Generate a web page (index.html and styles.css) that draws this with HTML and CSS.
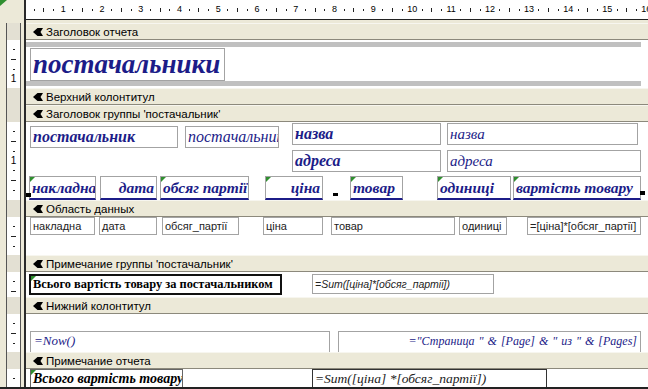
FILE: index.html
```html
<!DOCTYPE html>
<html>
<head>
<meta charset="utf-8">
<link rel="stylesheet" href="styles.css">
</head>
<body>
<div class="top">
  <div class="corner"><span class="tri"></span></div>
  <div class="ruler">
    <span class="m d"></span><span class="m t"></span><span class="m d"></span><span class="m n">1</span>
    <span class="m d"></span><span class="m t"></span><span class="m d"></span><span class="m n">2</span>
    <span class="m d"></span><span class="m t"></span><span class="m d"></span><span class="m n">3</span>
    <span class="m d"></span><span class="m t"></span><span class="m d"></span><span class="m n">4</span>
    <span class="m d"></span><span class="m t"></span><span class="m d"></span><span class="m n">5</span>
    <span class="m d"></span><span class="m t"></span><span class="m d"></span><span class="m n">6</span>
    <span class="m d"></span><span class="m t"></span><span class="m d"></span><span class="m n">7</span>
    <span class="m d"></span><span class="m t"></span><span class="m d"></span><span class="m n">8</span>
    <span class="m d"></span><span class="m t"></span><span class="m d"></span><span class="m n">9</span>
    <span class="m d"></span><span class="m t"></span><span class="m d"></span><span class="m n">10</span>
    <span class="m d"></span><span class="m t"></span><span class="m d"></span><span class="m n">11</span>
    <span class="m d"></span><span class="m t"></span><span class="m d"></span><span class="m n">12</span>
    <span class="m d"></span><span class="m t"></span><span class="m d"></span><span class="m n">13</span>
    <span class="m d"></span><span class="m t"></span><span class="m d"></span><span class="m n">14</span>
    <span class="m d"></span><span class="m t"></span><span class="m d"></span><span class="m n">15</span>
    <span class="m d"></span><span class="m t"></span><span class="m d"></span><span class="m n">16</span>
  </div>
</div>

<div class="row hdr">
  <div class="lc"><div class="vr"></div></div>
  <div class="bar"><svg class="ico" viewBox="0 0 10 8"><path d="M0 4 L4.5 0 H10 L7.5 4 L10 8 H4.5 Z"/></svg>Заголовок отчета</div>
</div>
<div class="row b1">
  <div class="lc"><div class="vr"><span class="vm s"></span><span class="vm w"></span><span class="vm s"></span><span class="vm">1</span><span class="vm s"></span></div></div>
  <div class="sec">
    <div class="line gb1"></div>
    <div class="c title">постачальники</div>
    <div class="line gb2"></div>
  </div>
</div>

<div class="row hdr">
  <div class="lc"><div class="vr"></div></div>
  <div class="bar"><svg class="ico" viewBox="0 0 10 8"><path d="M0 4 L4.5 0 H10 L7.5 4 L10 8 H4.5 Z"/></svg>Верхний колонтитул</div>
</div>
<div class="row hdr">
  <div class="lc"><div class="vr"></div></div>
  <div class="bar"><svg class="ico" viewBox="0 0 10 8"><path d="M0 4 L4.5 0 H10 L7.5 4 L10 8 H4.5 Z"/></svg>Заголовок группы 'постачальник'</div>
</div>
<div class="row b3">
  <div class="lc"><div class="vr"><span class="vm s"></span><span class="vm w"></span><span class="vm s"></span><span class="vm">1</span><span class="vm s"></span><span class="vm w"></span><span class="vm s"></span></div></div>
  <div class="sec">
    <div class="c lbl l-post">постачальник</div>
    <div class="c tb t-post">постачальник</div>
    <div class="c lbl l-nazva">назва</div>
    <div class="c tb t-nazva">назва</div>
    <div class="c lbl l-adr">адреса</div>
    <div class="c tb t-adr">адреса</div>
    <div class="c col k1 g">накладна</div>
    <div class="c col k2 r">дата</div>
    <div class="c col k3 g">обсяг партії</div>
    <div class="c col k4 g r">ціна</div>
    <div class="c col k5 g">товар</div>
    <div class="c col k6 g">одиниці</div>
    <div class="c col k7 g">вартість товару</div>
    <span class="hnd h1"></span>
    <span class="hnd h2"></span>
    <span class="hnd h3"></span>
  </div>
</div>

<div class="row hdr">
  <div class="lc"><div class="vr"></div></div>
  <div class="bar"><svg class="ico" viewBox="0 0 10 8"><path d="M0 4 L4.5 0 H10 L7.5 4 L10 8 H4.5 Z"/></svg>Область данных</div>
</div>
<div class="row b4">
  <div class="lc"><div class="vr"><span class="vm s"></span><span class="vm w"></span><span class="vm s"></span></div></div>
  <div class="sec">
    <div class="c dt d1">накладна</div>
    <div class="c dt d2">дата</div>
    <div class="c dt d3">обсяг_партії</div>
    <div class="c dt d4">ціна</div>
    <div class="c dt d5">товар</div>
    <div class="c dt d6">одиниці</div>
    <div class="c dt d7">=[ціна]*[обсяг_партії]</div>
  </div>
</div>

<div class="row hdr">
  <div class="lc"><div class="vr"></div></div>
  <div class="bar"><svg class="ico" viewBox="0 0 10 8"><path d="M0 4 L4.5 0 H10 L7.5 4 L10 8 H4.5 Z"/></svg>Примечание группы 'постачальник'</div>
</div>
<div class="row b5">
  <div class="lc"><div class="vr"><span class="vm s"></span><span class="vm w"></span></div></div>
  <div class="sec">
    <div class="c gsum g">Всього вартість товару за постачальником</div>
    <div class="c gexp">=Sum([ціна]*[обсяг_партії])</div>
  </div>
</div>

<div class="row hdr">
  <div class="lc"><div class="vr"></div></div>
  <div class="bar"><svg class="ico" viewBox="0 0 10 8"><path d="M0 4 L4.5 0 H10 L7.5 4 L10 8 H4.5 Z"/></svg>Нижний колонтитул</div>
</div>
<div class="row b6">
  <div class="lc"><div class="vr"><span class="vm s"></span><span class="vm w"></span><span class="vm s"></span></div></div>
  <div class="sec">
    <div class="c pf now">=Now()</div>
    <div class="c pf pages">="Страница " &amp; [Page] &amp; " из " &amp; [Pages]</div>
  </div>
</div>

<div class="row hdr">
  <div class="lc"><div class="vr"></div></div>
  <div class="bar"><svg class="ico" viewBox="0 0 10 8"><path d="M0 4 L4.5 0 H10 L7.5 4 L10 8 H4.5 Z"/></svg>Примечание отчета</div>
</div>
<div class="row b7">
  <div class="lc"><div class="vr"><span class="vm s"></span><span class="vm w"></span></div></div>
  <div class="sec">
    <div class="c rsum g">Всього вартість товару</div>
    <div class="c rexp">=Sum([ціна] *[обсяг_партії])</div>
  </div>
</div>
</body>
</html>
```
FILE: styles.css
```css
* { box-sizing: border-box; margin: 0; padding: 0; }
html, body { width: 648px; height: 389px; overflow: hidden; background: #ece9d8; }
body { font-family: "Liberation Sans", Arial, sans-serif; color: #000; }

.top { display: flex; height: 23px; }
.corner { flex: 0 0 26px; border-right: 2px solid #2a2a2a; position: relative; background: #ece9d8; }
.tri { position: absolute; left: 0; top: 0; border-top: 6px solid #2f8f2f; border-right: 7px solid transparent; }
.ruler { flex: 1; height: 20px; background: #fff; border-bottom: 1px solid #222; display: flex; align-items: center; padding-left: 3.4px; overflow: hidden; white-space: nowrap; }
.m { flex: 0 0 9.6875px; display: flex; justify-content: center; align-items: center; font-size: 9px; line-height: 1; }
.d::before { content: ""; width: 1px; height: 2px; background: #222; }
.t::before { content: ""; width: 1px; height: 4px; background: #222; }

.row { display: flex; }
.lc { flex: 0 0 26px; border-right: 2px solid #2a2a2a; padding-left: 6px; background: #ece9d8; }
.vr { width: 15px; height: 100%; border-left: 1px solid #555; border-right: 1px solid #555; background: #fff; overflow: hidden; display: flex; flex-direction: column; padding-top: 4.84px; }
.hdr .vr { background: #e3e0d3; }
.vm { flex: 0 0 9.6875px; display: flex; align-items: center; justify-content: center; font-size: 10px; line-height: 1; }
.s::before { content: ""; width: 2px; height: 1px; background: #222; }
.w::before { content: ""; width: 5px; height: 1px; background: #222; }

.hdr { height: 17px; }
.bar { flex: 1; display: flex; align-items: center; padding-left: 7px; font-size: 11.5px; background: #ece9d8; border-top: 1px solid #f7f6ef; border-bottom: 1px solid #8c897c; white-space: nowrap; }
.ico { width: 10px; height: 8px; margin-right: 3px; fill: #000; }

.sec { position: relative; flex: 1; background: #fff; overflow: hidden; }
.b1 { height: 48px; }
.b3 { height: 78px; }
.b4 { height: 38px; }
.b5 { height: 25px; }
.b6 { height: 38px; }
.b7 { height: 20px; border-bottom: 2px solid #222; }

.line { position: absolute; background: #c0c0c0; height: 5px; left: 0; width: 615px; }
.gb1 { top: 2px; }
.gb2 { top: 41px; }

.c { position: absolute; background: #fff; border: 1px solid #a3a3a3; overflow: hidden; white-space: nowrap; }
.g::before { content: ""; position: absolute; left: 0; top: 0; border-top: 5px solid #2f8f2f; border-right: 5px solid transparent; }

.title { left: 4px; top: 8px; width: 195px; height: 33px; font: italic bold 27px/30px "Liberation Serif", serif; color: #1c1c88; padding-left: 2px; }

.lbl { font: italic bold 16px/20px "Liberation Serif", serif; color: #1c1c88; padding-left: 2px; }
.tb { font: italic 15px/20px "Liberation Serif", serif; color: #1c1c88; padding-left: 2px; }
.t-post { font-size: 16px; }
.l-post { left: 4px; top: 4px; width: 148px; height: 22px; }
.t-post { left: 159px; top: 4px; width: 94px; height: 22px; }
.l-nazva { left: 266px; top: 1px; width: 149px; height: 22px; }
.t-nazva { left: 421px; top: 1px; width: 191px; height: 22px; }
.l-adr { left: 266px; top: 28px; width: 149px; height: 22px; }
.t-adr { left: 421px; top: 28px; width: 194px; height: 22px; }

.col { top: 54px; height: 24px; font: italic bold 15.5px/20px "Liberation Serif", serif; color: #1c1c88; padding: 1px 2px 0; border-color: #a3a3a3; border-bottom: 2px solid #1c1c88; }
.r { text-align: right; }
.k1 { left: 3px; width: 67px; }
.k2 { left: 74px; width: 57px; }
.k3 { left: 134px; width: 89px; }
.k4 { left: 239px; width: 58px; }
.k5 { left: 324px; width: 53px; }
.k6 { left: 411px; width: 74px; }
.k7 { left: 487px; width: 128px; }
.hnd { position: absolute; background: #000; width: 5px; height: 4px; }
.h1 { left: 0; top: 71px; }
.h2 { left: 307px; top: 71px; width: 5px; height: 3px; }
.h3 { left: 614px; top: 69px; }

.dt { top: 0; height: 18px; font: 11px/16px "Liberation Sans", Arial, sans-serif; color: #222; padding-left: 2px; }
.d1 { left: 4px; width: 65px; }
.d2 { left: 73px; width: 58px; }
.d3 { left: 136px; width: 77px; }
.d4 { left: 237px; width: 60px; }
.d5 { left: 305px; width: 124px; }
.d6 { left: 433px; width: 48px; }
.d7 { left: 501px; width: 114px; }

.gsum { left: 3px; top: 2px; width: 253px; height: 21px; border: 2px solid #111; font: bold 12.4px/17px "Liberation Serif", serif; color: #000; padding-left: 2px; }
.gexp { left: 286px; top: 2px; width: 182px; height: 20px; font: italic 10.5px/18px "Liberation Sans", Arial, sans-serif; color: #222; padding-left: 2px; }

.pf { top: 17px; height: 22px; font: italic 12px/18px "Liberation Serif", serif; color: #1c1c88; padding: 0 3px; word-spacing: 1px; }
.now { left: 4px; width: 300px; font-size: 13px; }
.pages { left: 312px; width: 303px; text-align: right; }

.rsum { left: 4px; top: 0; width: 153px; height: 20px; border-color: #666; font: italic bold 14px/18px "Liberation Serif", serif; color: #000; padding-left: 2px; }
.rexp { left: 286px; top: 0; width: 235px; height: 20px; border: 1px solid #333; font: italic 13.5px/18px "Liberation Serif", serif; color: #222; padding-left: 2px; }
```
